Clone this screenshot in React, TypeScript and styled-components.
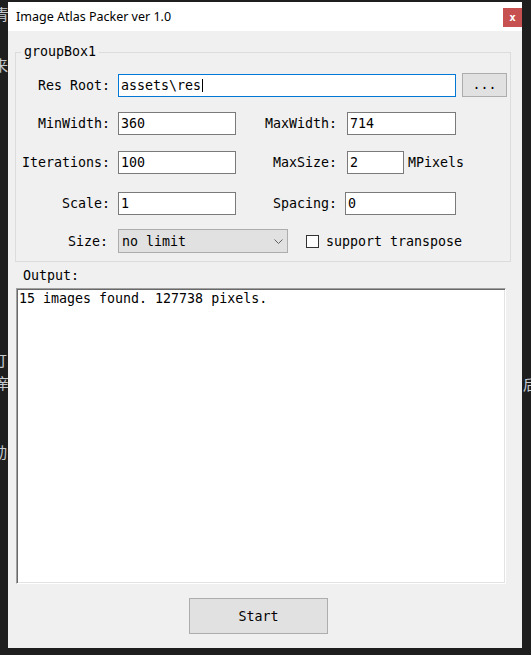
import React from "react";
import styled, { createGlobalStyle } from "styled-components";

const MONO = `"DejaVu Sans Mono", "Liberation Mono", monospace`;

const GlobalStyle = createGlobalStyle`
  html, body { margin: 0; padding: 0; background: #1e1e1e; }
  * { box-sizing: border-box; }
`;

const Desktop = styled.div`
  position: relative;
  width: 531px;
  height: 655px;
  overflow: hidden;
  background: #1e1e1e;
  padding: 2px 0 0 8px;
`;

const StrayGlyph = styled.span<{ $x: number; $y: number; $c?: string }>`
  position: absolute;
  left: ${(p) => p.$x}px;
  top: ${(p) => p.$y}px;
  font: 15px "Noto Sans CJK SC", sans-serif;
  line-height: 1;
  color: ${(p) => p.$c ?? "#c5cad1"};
`;

const Window = styled.div`
  position: relative;
  z-index: 1;
  width: 514px;
  height: 646px;
  background: #f0f0f0;
  display: flex;
  flex-direction: column;
`;

const TitleBar = styled.div`
  height: 29px;
  flex: none;
  background: #fff;
  display: flex;
  align-items: center;
  justify-content: space-between;
  padding-left: 8px;
`;

const Title = styled.span`
  font: 12.5px "Noto Sans", sans-serif;
  color: #000;
`;

const CloseButton = styled.div`
  align-self: flex-start;
  margin-top: 6px;
  width: 19px;
  height: 19px;
  background: #c75050;
  color: #fff;
  font: bold 11px ${MONO};
  display: flex;
  align-items: center;
  justify-content: center;
`;

const Client = styled.div`
  flex: 1;
  display: flex;
  flex-direction: column;
  align-items: flex-start;
  padding: 13px 0 0 7px;
  font: 13.3px ${MONO};
  color: #000;
`;

const GroupBox = styled.fieldset`
  width: 496px;
  margin: 0;
  padding: 0 0 8px 0;
  min-width: 0;
  border: 1px solid #dcdcdc;
`;

const GroupLegend = styled.legend`
  font: 13.3px ${MONO};
  line-height: 16px;
  padding: 0 3px;
  margin-left: 5px;
`;

const Row = styled.div<{ $mt: number }>`
  display: flex;
  align-items: center;
  height: 24px;
  margin-top: ${(p) => p.$mt}px;
`;

const Label = styled.span<{ $w: number; $gap?: number; $pr?: number }>`
  width: ${(p) => p.$w}px;
  margin-right: ${(p) => p.$gap ?? 8}px;
  padding-right: ${(p) => p.$pr ?? 0}px;
  text-align: right;
  white-space: nowrap;
  flex: none;
`;

const TextBox = styled.div<{ $w: number; $focused?: boolean }>`
  width: ${(p) => p.$w}px;
  height: 23px;
  flex: none;
  background: #fff;
  border: 1px solid ${(p) => (p.$focused ? "#0078d7" : "#7a7a7a")};
  padding: 0 2px;
  line-height: 21px;
  white-space: nowrap;
  align-self: flex-end;
`;

const Caret = styled.span`
  display: inline-block;
  width: 1px;
  height: 13px;
  margin-left: 1px;
  background: #000;
  vertical-align: -2px;
`;

const SmallButton = styled.div`
  width: 45px;
  height: 24px;
  margin-left: 6px;
  flex: none;
  background: #e1e1e1;
  border: 1px solid #adadad;
  display: flex;
  align-items: center;
  justify-content: center;
  padding-bottom: 2px;
`;

const Unit = styled.span`
  margin-left: 4px;
`;

const ComboBox = styled.div`
  width: 170px;
  height: 24px;
  flex: none;
  background: #e1e1e1;
  border: 1px solid #adadad;
  display: flex;
  align-items: center;
  padding: 0 4px 0 3px;
`;

const ComboText = styled.span`
  flex: 1;
`;

const CheckBox = styled.span`
  width: 13px;
  height: 13px;
  margin-left: 18px;
  margin-right: 7px;
  flex: none;
  background: #fff;
  border: 1px solid #333;
`;

const OutputLabel = styled.div`
  margin: 6px 0 0 8px;
  line-height: 16px;
`;

const OutputBox = styled.div`
  margin: 4px 0 0 1px;
  width: 490px;
  height: 296px;
  background: #fff;
  border: 1px solid;
  border-color: #a0a0a0 #ffffff #ffffff #a0a0a0;
  box-shadow: inset 1px 1px 0 #696969, inset -1px -1px 0 #e3e3e3;
  padding: 1px 2px;
  line-height: 18px;
`;

const StartButton = styled.div`
  margin: 14px 0 0 174px;
  width: 139px;
  height: 36px;
  background: #e1e1e1;
  border: 1px solid #adadad;
  display: flex;
  align-items: center;
  justify-content: center;
`;

export default function App() {
  return (
    <>
      <GlobalStyle />
      <Desktop>
        <StrayGlyph $x={-6} $y={6}>青</StrayGlyph>
        <StrayGlyph $x={-7} $y={57}>来</StrayGlyph>
        <StrayGlyph $x={-8} $y={352}>打</StrayGlyph>
        <StrayGlyph $x={-6} $y={375}>庠</StrayGlyph>
        <StrayGlyph $x={-8} $y={444}>动</StrayGlyph>
        <StrayGlyph $x={523} $y={376}>后</StrayGlyph>
        <Window>
          <TitleBar>
            <Title>Image Atlas Packer ver 1.0</Title>
            <CloseButton>x</CloseButton>
          </TitleBar>
          <Client>
            <GroupBox>
              <GroupLegend>groupBox1</GroupLegend>
              <Row $mt={13}>
                <Label $w={94}>Res Root:</Label>
                <TextBox $w={338} $focused>
                  assets\res
                  <Caret />
                </TextBox>
                <SmallButton>...</SmallButton>
              </Row>
              <Row $mt={14}>
                <Label $w={94}>MinWidth:</Label>
                <TextBox $w={118}>360</TextBox>
                <Label $w={101} $gap={10}>MaxWidth:</Label>
                <TextBox $w={109}>714</TextBox>
              </Row>
              <Row $mt={15}>
                <Label $w={94}>Iterations:</Label>
                <TextBox $w={118}>100</TextBox>
                <Label $w={101} $gap={10}>MaxSize:</Label>
                <TextBox $w={57}>2</TextBox>
                <Unit>MPixels</Unit>
              </Row>
              <Row $mt={17}>
                <Label $w={94}>Scale:</Label>
                <TextBox $w={118}>1</TextBox>
                <Label $w={101} $gap={8}>Spacing:</Label>
                <TextBox $w={111}>0</TextBox>
              </Row>
              <Row $mt={14}>
                <Label $w={94} $pr={2}>Size:</Label>
                <ComboBox>
                  <ComboText>no limit</ComboText>
                  <svg width="9" height="5" viewBox="0 0 9 5">
                    <path d="M0.5 0.5 L4.5 4.5 L8.5 0.5" fill="none" stroke="#606060" strokeWidth="1" />
                  </svg>
                </ComboBox>
                <CheckBox />
                <span>support transpose</span>
              </Row>
            </GroupBox>
            <OutputLabel>Output:</OutputLabel>
            <OutputBox>15 images found. 127738 pixels.</OutputBox>
            <StartButton>Start</StartButton>
          </Client>
        </Window>
      </Desktop>
    </>
  );
}
